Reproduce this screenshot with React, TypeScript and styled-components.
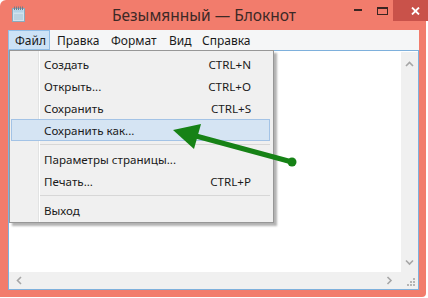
import React from "react";
import styled, { createGlobalStyle } from "styled-components";

const Global = createGlobalStyle`
  html, body { margin: 0; padding: 0; background: #ffffff; }
  body { font-family: "Noto Sans", "Open Sans", sans-serif; }
  #root { width: 428px; height: 298px; overflow: hidden; }
`;

const Window = styled.div`
  position: relative;
  width: 426px;
  height: 297px;
  box-sizing: border-box;
  background: #f27c6c;
  border-radius: 6px 6px 4px 0;
  padding: 0 7px 7px 8px;
  display: flex;
  flex-direction: column;
`;

const TitleBar = styled.div`
  height: 30px;
  display: grid;
  grid-template-columns: 40px 1fr 140px;
  align-items: start;
`;

const AppIcon = styled.div`
  padding: 5px 0 0 4px;
  height: 16px;
`;

const Title = styled.div`
  text-align: center;
  font-size: 15.5px;
  line-height: 17px;
  color: #3c2926;
  padding-top: 7px;
  padding-left: 64px;
  white-space: nowrap;
`;

const Controls = styled.div`
  display: flex;
  justify-content: flex-end;
  align-items: flex-start;
  height: 21px;
`;

const CtrlButton = styled.div<{ $w: number }>`
  width: ${(p) => p.$w}px;
  height: 21px;
  display: flex;
  align-items: center;
  justify-content: center;
`;

const CloseButton = styled.div`
  width: 45px;
  height: 21px;
  margin-right: -2px;
  background: #c9524a;
  display: flex;
  align-items: center;
  justify-content: center;
`;

const MenuBar = styled.div`
  height: 20px;
  background: #f5f6f7;
  display: flex;
  align-items: stretch;
  font-size: 12px;
  color: #1a1a1a;
`;

const MenuItem = styled.div<{ $active?: boolean; $w: number }>`
  width: ${(p) => p.$w}px;
  box-sizing: border-box;
  display: flex;
  align-items: center;
  padding-left: ${(p) => (p.$active ? 6 : 7)}px;
  background: ${(p) => (p.$active ? "#cce2f6" : "transparent")};
  border: ${(p) => (p.$active ? "1px solid #90bde6" : "none")};
`;

const EditArea = styled.div`
  flex: 1;
  border: 1px solid #7eb0dc;
  background: #ffffff;
  display: grid;
  grid-template-columns: 1fr 17px;
  grid-template-rows: 1fr 17px;
`;

const TextPane = styled.div`
  background: #ffffff;
`;

const VScroll = styled.div`
  background: #f0f0f0;
  display: flex;
  flex-direction: column;
  justify-content: space-between;
  align-items: center;
  padding: 9px 0 6px;
  margin-top: 1px;
`;

const HScroll = styled.div`
  background: #f0f0f0;
  display: flex;
  justify-content: space-between;
  align-items: center;
  padding: 0 8px 0 7px;
`;

const Grip = styled.div`
  background: #f0f0f0;
  display: flex;
  align-items: flex-end;
  justify-content: flex-end;
  padding: 0 3px 3px 0;
`;

const Dropdown = styled.div`
  position: absolute;
  left: 9px;
  top: 50px;
  width: 265px;
  box-sizing: border-box;
  background: #f0f0f0;
  border: 1px solid #979797;
  box-shadow: 3px 3px 2px rgba(0, 0, 0, 0.3);
  padding: 2px 0 1px;
  font-size: 11.6px;
  color: #1a1a1a;
  z-index: 2;
`;

const Gutter = styled.div`
  position: absolute;
  left: 28px;
  top: 0;
  bottom: 0;
  width: 1px;
  background: #e2e3e3;
  border-right: 1px solid #ffffff;
`;

const DropItem = styled.div<{ $hl?: boolean }>`
  position: relative;
  height: 22px;
  box-sizing: border-box;
  margin: 0 3px 0 1px;
  padding: 0 18px 0 32px;
  display: flex;
  align-items: center;
  justify-content: space-between;
  background: ${(p) => (p.$hl ? "#d5e4f3" : "transparent")};
  border: 1px solid ${(p) => (p.$hl ? "#a3c3e6" : "transparent")};
  z-index: 1;
`;

const Shortcut = styled.span`
  color: #1a1a1a;
`;

const Separator = styled.div`
  position: relative;
  height: 7px;
  display: flex;
  align-items: center;
  padding: 0 3px 0 30px;
  &::after {
    content: "";
    flex: 1;
    height: 1px;
    background: #d7d7d7;
  }
`;

const Overlay = styled.svg`
  position: absolute;
  left: 0;
  top: 0;
  width: 428px;
  height: 298px;
  pointer-events: none;
  z-index: 3;
`;

const Chevron = ({ dir }: { dir: "up" | "down" | "left" | "right" }) => {
  const paths: Record<string, string> = {
    up: "M1 5 L4.5 1.5 L8 5",
    down: "M1 1.5 L4.5 5 L8 1.5",
    left: "M5 1 L1.5 4.5 L5 8",
    right: "M1.5 1 L5 4.5 L1.5 8",
  };
  const vertical = dir === "up" || dir === "down";
  return (
    <svg width={vertical ? 9 : 7} height={vertical ? 7 : 9} viewBox={vertical ? "0 0 9 7" : "0 0 7 9"}>
      <path d={paths[dir]} fill="none" stroke="#a6a6a6" strokeWidth="1.6" />
    </svg>
  );
};

const items: Array<{ label: string; key?: string; hl?: boolean } | "sep"> = [
  { label: "Создать", key: "CTRL+N" },
  { label: "Открыть...", key: "CTRL+O" },
  { label: "Сохранить", key: "CTRL+S" },
  { label: "Сохранить как...", hl: true },
  "sep",
  { label: "Параметры страницы..." },
  { label: "Печать...", key: "CTRL+P" },
  "sep",
  { label: "Выход" },
];

export default function App() {
  return (
    <>
      <Global />
      <Window>
        <TitleBar>
          <AppIcon>
            <svg width="13" height="16" viewBox="0 0 13 16">
              <rect x="0.5" y="2.5" width="12" height="13" fill="#cfe3ef" stroke="#8aa9bd" />
              <rect x="1.5" y="3.5" width="10" height="3" fill="#b4d3e8" />
              <line x1="2" y1="9" x2="11" y2="9" stroke="#a7c2d4" />
              <line x1="2" y1="11" x2="11" y2="11" stroke="#a7c2d4" />
              <line x1="2" y1="13" x2="11" y2="13" stroke="#a7c2d4" />
              {[2, 4, 6, 8, 10].map((x) => (
                <line key={x} x1={x + 0.5} y1="0.5" x2={x + 0.5} y2="4" stroke="#6f7f8a" />
              ))}
            </svg>
          </AppIcon>
          <Title>Безымянный — Блокнот</Title>
          <Controls>
            <CtrlButton $w={26}>
              <svg width="8" height="3" viewBox="0 0 8 3">
                <rect x="0" y="0" width="8" height="2" fill="#3a2522" />
              </svg>
            </CtrlButton>
            <CtrlButton $w={22}>
              <svg width="11" height="8" viewBox="0 0 11 8">
                <rect x="0.5" y="0.5" width="10" height="7" fill="none" stroke="#3a2522" />
                <rect x="0" y="0" width="11" height="2" fill="#3a2522" />
              </svg>
            </CtrlButton>
            <CloseButton>
              <svg width="9" height="8" viewBox="0 0 9 8">
                <path d="M1 0.5 L8 7.5 M8 0.5 L1 7.5" stroke="#ffffff" strokeWidth="1.8" />
              </svg>
            </CloseButton>
          </Controls>
        </TitleBar>
        <MenuBar>
          <MenuItem $active $w={42}>Файл</MenuItem>
          <MenuItem $w={54}>Правка</MenuItem>
          <MenuItem $w={58}>Формат</MenuItem>
          <MenuItem $w={33}>Вид</MenuItem>
          <MenuItem $w={60}>Справка</MenuItem>
        </MenuBar>
        <EditArea>
          <TextPane />
          <VScroll>
            <Chevron dir="up" />
            <Chevron dir="down" />
          </VScroll>
          <HScroll>
            <Chevron dir="left" />
            <Chevron dir="right" />
          </HScroll>
          <Grip>
            <svg width="8" height="8" viewBox="0 0 8 8">
              {[
                [6, 0],
                [3, 3],
                [6, 3],
                [0, 6],
                [3, 6],
                [6, 6],
              ].map(([x, y], i) => (
                <rect key={i} x={x} y={y} width="2" height="2" fill="#b5b5b5" />
              ))}
            </svg>
          </Grip>
        </EditArea>
        <Dropdown>
          <Gutter />
          {items.map((it, i) =>
            it === "sep" ? (
              <Separator key={i} />
            ) : (
              <DropItem key={i} $hl={it.hl}>
                <span>{it.label}</span>
                {it.key && <Shortcut>{it.key}</Shortcut>}
              </DropItem>
            )
          )}
        </Dropdown>
      </Window>
      <Overlay viewBox="0 0 428 298">
        <line x1="292" y1="162" x2="196" y2="136" stroke="#168216" strokeWidth="5" strokeLinecap="round" />
        <polygon points="173,130 194,149 201,124" fill="#168216" />
        <circle cx="292" cy="162" r="4.5" fill="#168216" />
      </Overlay>
    </>
  );
}
